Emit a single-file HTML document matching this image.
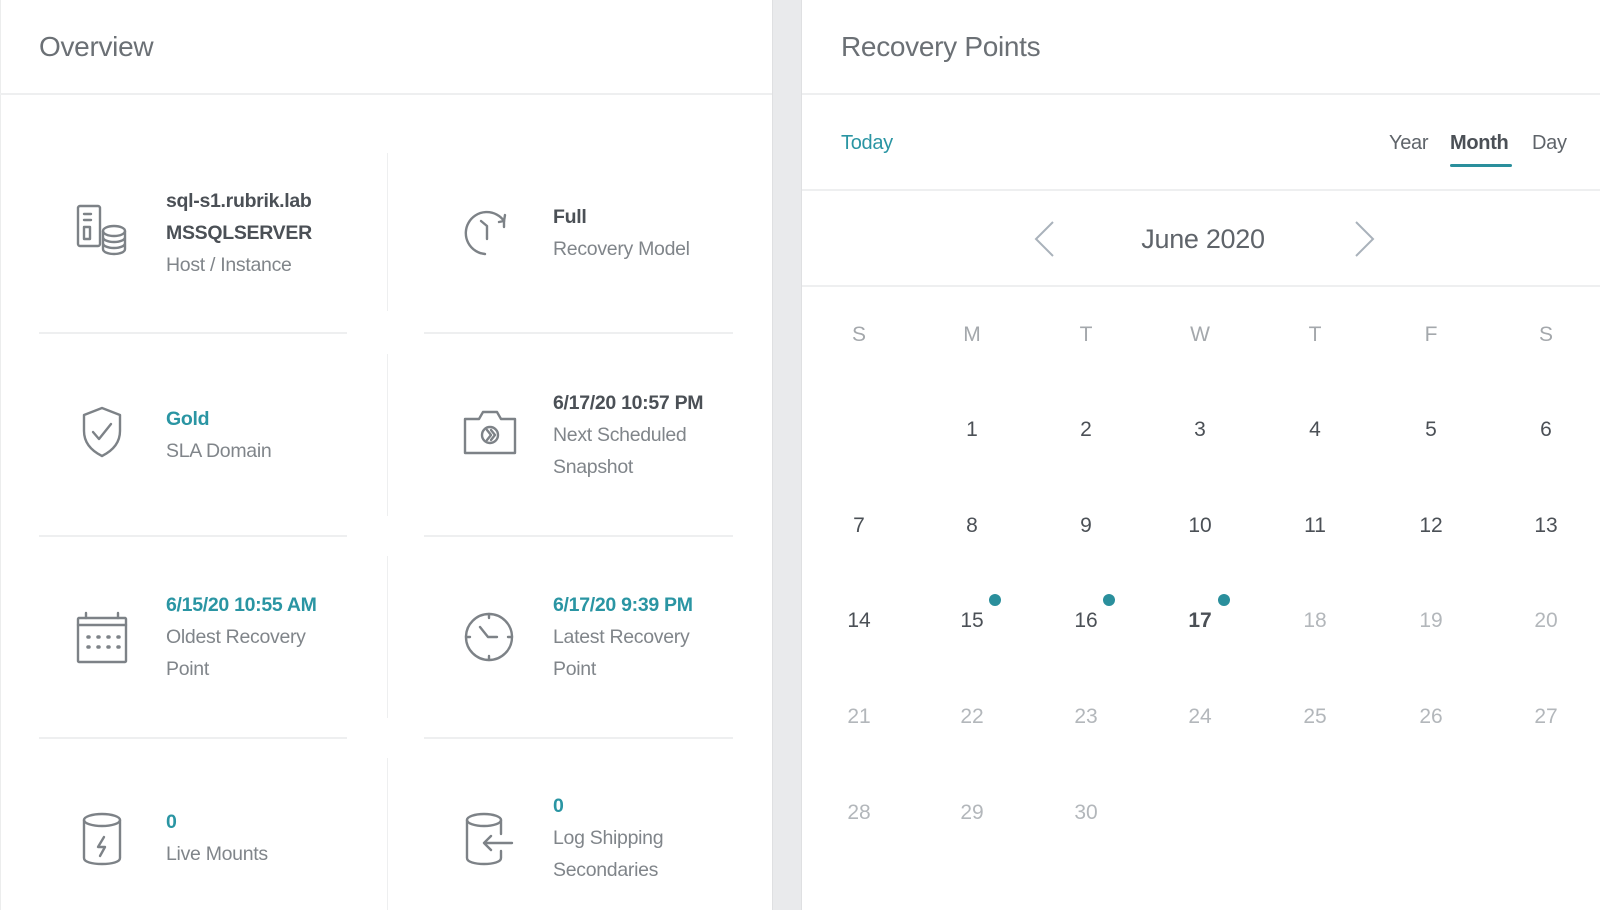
<!DOCTYPE html>
<html><head><meta charset="utf-8"><style>
*{margin:0;padding:0;box-sizing:border-box}
body{width:1600px;height:910px;overflow:hidden;background:#fff;font-family:"Liberation Sans",sans-serif;position:relative}
.a{position:absolute}
.t{position:absolute;font-size:19.5px;line-height:32px;color:#80858a;white-space:nowrap;letter-spacing:-0.3px}
.b{color:#4b5056;font-weight:bold}
.c{color:#2a95a3;font-weight:bold}
.hl{position:absolute;height:2px;background:#eeeff0}
.vl{position:absolute;width:1px;background:#eeeff0}
svg.i{position:absolute;fill:none;stroke:#7d8287;stroke-width:2.4;stroke-linecap:round;stroke-linejoin:round}
.d{position:absolute;width:60px;margin-left:-30px;text-align:center;font-size:21px;color:#4b5056;transform:translateY(-50%)}
.g{color:#b3b7bb}
.w{color:#a4a8ac;font-size:21px}
.dot{position:absolute;width:12px;height:12px;border-radius:50%;background:#2a8f9c}
</style></head><body>
<div class="a" style="left:772px;top:0;width:30px;height:910px;background:#e9eaec;border-left:1px solid #dfe0e2;border-right:1px solid #dfe0e2"></div>
<div class="a" style="left:0;top:0;width:772px;height:910px;border-left:1px solid #eceded"></div>
<div class="t" style="left:39px;top:28px;font-size:28px;line-height:38px;color:#6b7075">Overview</div>
<div class="hl" style="left:0;top:93px;width:772px"></div>
<div class="t" style="left:841px;top:28px;font-size:28px;line-height:38px;color:#6b7075">Recovery Points</div>
<div class="hl" style="left:802px;top:93px;width:798px"></div>

<!-- cards grid lines -->
<div class="vl" style="left:387px;top:153px;height:158px"></div>
<div class="vl" style="left:387px;top:354px;height:162px"></div>
<div class="vl" style="left:387px;top:556px;height:162px"></div>
<div class="vl" style="left:387px;top:758px;height:152px"></div>
<div class="hl" style="left:39px;top:332px;width:308px"></div>
<div class="hl" style="left:424px;top:332px;width:309px"></div>
<div class="hl" style="left:39px;top:535px;width:308px"></div>
<div class="hl" style="left:424px;top:535px;width:309px"></div>
<div class="hl" style="left:39px;top:737px;width:308px"></div>
<div class="hl" style="left:424px;top:737px;width:309px"></div>

<!-- icons -->
<svg class="i" style="left:76px;top:204px" width="52" height="52" viewBox="0 0 52 52"><rect x="2" y="2" width="22" height="40" rx="2"/><line x1="8" y1="10" x2="15" y2="10"/><line x1="8" y1="16" x2="15" y2="16"/><rect x="8" y="23" width="6" height="12"/><ellipse cx="38" cy="27" rx="11" ry="5" fill="#fff"/><path d="M27 27v18c0 3 5 5 11 5s11-2 11-5V27M27 33c0 3 5 5 11 5s11-2 11-5M27 39c0 3 5 5 11 5s11-2 11-5"/></svg>
<svg class="i" style="left:463px;top:207px" width="52" height="52" viewBox="0 0 52 52"><path d="M22 47A21 21 0 1 1 41 14"/><path d="M36 15l5-1 1-6"/><path d="M41 14v6"/><path d="M18 14l6 5v13"/></svg>
<svg class="i" style="left:78px;top:406px" width="48" height="52" viewBox="0 0 48 52"><path d="M24 2L42 9v16c0 12-8 20-18 25C14 45 6 37 6 25V9z"/><path d="M15 26l6 7 12-15"/></svg>
<svg class="i" style="left:463px;top:409px" width="54" height="46" viewBox="0 0 54 46"><path d="M2 10h14l4-7h14l4 7h14v34H2z"/><circle cx="27" cy="26" r="8"/><path d="M24 21l4 5-4 5M28 21l4 5-4 5"/></svg>
<svg class="i" style="left:75px;top:611px" width="54" height="54" viewBox="0 0 54 54"><rect x="3" y="7" width="48" height="44" rx="1"/><line x1="3" y1="14" x2="51" y2="14"/><line x1="11" y1="2" x2="11" y2="7"/><line x1="43" y1="2" x2="43" y2="7"/><g stroke-width="3.5"><path d="M12 26h1M22 26h1M32 26h1M42 26h1M12 36h1M22 36h1M32 36h1M42 36h1" transform="translate(1 0)"/></g></svg>
<svg class="i" style="left:463px;top:611px" width="52" height="52" viewBox="0 0 52 52"><circle cx="26" cy="26" r="23"/><path d="M26 3v4M26 45v4M3 26h4M45 26h4"/><path d="M17 16l8 10h9"/></svg>
<svg class="i" style="left:80px;top:811px" width="44" height="56" viewBox="0 0 44 56"><ellipse cx="22" cy="9" rx="18" ry="6"/><path d="M4 9v38c0 4 8 6 18 6s18-2 18-6V9"/><path d="M24 26l-6 10h7l-5 9"/></svg>
<svg class="i" style="left:464px;top:811px" width="52" height="56" viewBox="0 0 52 56"><ellipse cx="20" cy="9" rx="17" ry="6"/><path d="M3 9v38c0 4 8 6 17 6s17-2 17-6V40M37 9v14"/><path d="M48 32H20M27 25l-7 7 7 7"/></svg>

<!-- texts -->
<div class="t" style="left:166px;top:185px"><span class="b">sql-s1.rubrik.lab</span><br><span class="b">MSSQLSERVER</span><br>Host / Instance</div>
<div class="t" style="left:553px;top:201px"><span class="b">Full</span><br>Recovery Model</div>
<div class="t" style="left:166px;top:403px"><span class="c">Gold</span><br>SLA Domain</div>
<div class="t" style="left:553px;top:387px"><span class="b">6/17/20 10:57 PM</span><br>Next Scheduled<br>Snapshot</div>
<div class="t" style="left:166px;top:589px"><span class="c">6/15/20 10:55 AM</span><br>Oldest Recovery<br>Point</div>
<div class="t" style="left:553px;top:589px"><span class="c">6/17/20 9:39 PM</span><br>Latest Recovery<br>Point</div>
<div class="t" style="left:166px;top:806px"><span class="c">0</span><br>Live Mounts</div>
<div class="t" style="left:553px;top:790px"><span class="c">0</span><br>Log Shipping<br>Secondaries</div>

<!-- right panel -->
<div class="t" style="left:841px;top:127px;font-size:20px;color:#2a95a3">Today</div>
<div class="t" style="left:1389px;top:127px;font-size:20px;color:#5f646a">Year</div>
<div class="t" style="left:1450px;top:127px;font-size:20px;color:#4b5056;font-weight:bold">Month</div>
<div class="a" style="left:1450px;top:164px;width:62px;height:3px;background:#2a8f9c;border-radius:2px"></div>
<div class="t" style="left:1532px;top:127px;font-size:20px;color:#5f646a">Day</div>
<div class="hl" style="left:802px;top:189px;width:798px"></div>
<svg class="a" style="left:1033px;top:220px" width="24" height="38" fill="none" stroke="#a9b2bb" stroke-width="2"><path d="M20 2L3 19l17 17"/></svg>
<svg class="a" style="left:1352px;top:220px" width="24" height="38" fill="none" stroke="#a9b2bb" stroke-width="2"><path d="M4 2l17 17L4 36"/></svg>
<div class="t" style="left:1103px;top:222px;width:200px;text-align:center;font-size:27px;line-height:34px;color:#5f646a">June 2020</div>
<div class="hl" style="left:802px;top:285px;width:798px"></div>

<div class="d w" style="left:859px;top:335px">S</div>
<div class="d w" style="left:972px;top:335px">M</div>
<div class="d w" style="left:1086px;top:335px">T</div>
<div class="d w" style="left:1200px;top:335px">W</div>
<div class="d w" style="left:1315px;top:335px">T</div>
<div class="d w" style="left:1431px;top:335px">F</div>
<div class="d w" style="left:1546px;top:335px">S</div>

<div class="d" style="left:972px;top:430px">1</div>
<div class="d" style="left:1086px;top:430px">2</div>
<div class="d" style="left:1200px;top:430px">3</div>
<div class="d" style="left:1315px;top:430px">4</div>
<div class="d" style="left:1431px;top:430px">5</div>
<div class="d" style="left:1546px;top:430px">6</div>

<div class="d" style="left:859px;top:526px">7</div>
<div class="d" style="left:972px;top:526px">8</div>
<div class="d" style="left:1086px;top:526px">9</div>
<div class="d" style="left:1200px;top:526px">10</div>
<div class="d" style="left:1315px;top:526px">11</div>
<div class="d" style="left:1431px;top:526px">12</div>
<div class="d" style="left:1546px;top:526px">13</div>

<div class="d" style="left:859px;top:621px">14</div>
<div class="d" style="left:972px;top:621px">15</div>
<div class="d" style="left:1086px;top:621px">16</div>
<div class="d" style="left:1200px;top:621px;font-weight:bold">17</div>
<div class="d g" style="left:1315px;top:621px">18</div>
<div class="d g" style="left:1431px;top:621px">19</div>
<div class="d g" style="left:1546px;top:621px">20</div>
<div class="dot" style="left:989px;top:594px"></div>
<div class="dot" style="left:1103px;top:594px"></div>
<div class="dot" style="left:1218px;top:594px"></div>

<div class="d g" style="left:859px;top:717px">21</div>
<div class="d g" style="left:972px;top:717px">22</div>
<div class="d g" style="left:1086px;top:717px">23</div>
<div class="d g" style="left:1200px;top:717px">24</div>
<div class="d g" style="left:1315px;top:717px">25</div>
<div class="d g" style="left:1431px;top:717px">26</div>
<div class="d g" style="left:1546px;top:717px">27</div>

<div class="d g" style="left:859px;top:813px">28</div>
<div class="d g" style="left:972px;top:813px">29</div>
<div class="d g" style="left:1086px;top:813px">30</div>
</body></html>
